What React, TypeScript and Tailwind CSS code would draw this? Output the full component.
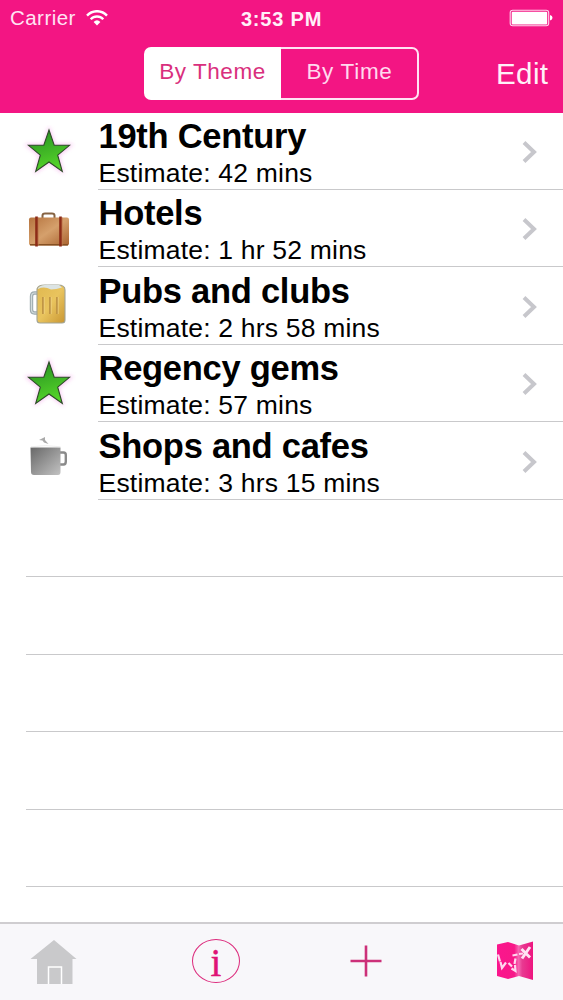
type IconName = 'star' | 'suitcase' | 'beer' | 'mug'

type Tour = {
  id: string
  title: string
  estimate: string
  icon: IconName
}

const tours: Tour[] = [
  { id: 'century', title: '19th Century', estimate: '42 mins', icon: 'star' },
  { id: 'hotels', title: 'Hotels', estimate: '1 hr 52 mins', icon: 'suitcase' },
  { id: 'pubs', title: 'Pubs and clubs', estimate: '2 hrs 58 mins', icon: 'beer' },
  { id: 'regency', title: 'Regency gems', estimate: '57 mins', icon: 'star' },
  { id: 'shops', title: 'Shops and cafes', estimate: '3 hrs 15 mins', icon: 'mug' },
]

export default function App() {
  return (
    <div className="flex h-[1000px] w-[563px] flex-col overflow-hidden bg-white font-['Liberation_Sans',Arial,sans-serif] text-black">
      <header className="h-[112.5px] shrink-0 bg-[#f31583] text-white">
        <StatusBar />
        <NavBar />
      </header>

      <main className="flex-1 overflow-hidden">
        {tours.map((tour) => (
          <TourRow key={tour.id} tour={tour} />
        ))}
        {/* Empty rows keep their separators, like a plain table view */}
        {[0, 1, 2, 3, 4].map((i) => (
          <div key={i} className="ml-[26px] h-[77.47px] border-b border-[#c9c9cb]" />
        ))}
      </main>

      <TabBar />
    </div>
  )
}

function StatusBar() {
  return (
    <div className="grid h-[36px] grid-cols-3 items-center px-[10px]">
      <div className="flex items-center gap-[10px] text-[#ffe3f3]">
        <span className="text-[20.5px] leading-none tracking-[0.45px]">Carrier</span>
        <svg width="22" height="16" viewBox="0 0 22 16" fill="none" stroke="#fff" strokeWidth="2.4">
          <path d="M1 5.6C6.6 -0.3 15.4 -0.3 21 5.6" />
          <path d="M4.7 9.2C8.2 5.5 13.8 5.5 17.3 9.2" />
          <path d="M7.6 11.9Q11 8.8 14.4 11.9L11 15.4Z" fill="#fff" stroke="none" />
        </svg>
      </div>
      <span className="pt-px text-center text-[20px] font-bold leading-none tracking-[0.8px] text-[#fff0f8]">
        3:53 PM
      </span>
      <svg className="justify-self-end" width="44" height="18" viewBox="0 0 44 18">
        <rect x="1.2" y="1.3" width="38.5" height="15.5" rx="2.5" fill="none" stroke="#ffd5ec" strokeWidth="1.1" />
        <rect x="2.7" y="2.7" width="35.5" height="12.7" rx="1" fill="#fff" />
        <path d="M41 6Q43.5 6.5 43.5 8.8T41 11.6Z" fill="#fff" />
      </svg>
    </div>
  )
}

function NavBar() {
  return (
    <div className="flex pl-[144px] pt-[11px]">
      <div className="flex h-[53px] w-[275px] text-[22.5px] leading-none">
        <button
          type="button"
          className="flex w-[137px] items-center justify-center rounded-l-[7px] bg-white pb-[2px] tracking-[0.55px] text-[#d92f7d]"
        >
          By Theme
        </button>
        <button
          type="button"
          className="flex flex-1 items-center justify-center rounded-r-[7px] border-2 border-l-0 border-[#ffe3f3] pb-[2px] pl-px tracking-[0.7px] text-[#ffd9ee]"
        >
          By Time
        </button>
      </div>
      <button type="button" className="ml-[77px] h-[53px] text-[29.5px] leading-[54px] tracking-[0.4px] text-[#fff0f8]">
        Edit
      </button>
    </div>
  )
}

function TourRow({ tour }: { tour: Tour }) {
  return (
    <div className="flex h-[77.47px]">
      <div className="flex w-[98px] shrink-0 justify-center pt-[12px]">
        <TourIcon name={tour.icon} />
      </div>
      <div className="flex flex-1 items-center justify-between border-b border-[#c9c9cb]">
        <div className="whitespace-nowrap pl-[0.5px] pt-[4px]">
          <div className="text-[34.5px] font-bold leading-[40px] tracking-[-0.27px]">{tour.title}</div>
          <div className="text-[26.5px] leading-[34px] tracking-[0.2px]">Estimate: {tour.estimate}</div>
        </div>
        <svg className="mr-[24px] mt-[2px]" width="18" height="24" viewBox="0 0 18 24" fill="none" stroke="#c7c7cc" strokeWidth="4">
          <path d="M3 2.5L13 12L3 21.5" />
        </svg>
      </div>
    </div>
  )
}

function TourIcon({ name }: { name: IconName }) {
  if (name === 'star') {
    return (
      <svg width="54" height="54" viewBox="0 0 54 54">
        <defs>
          <linearGradient id="starFill" x1="0" y1="0" x2="0.3" y2="1">
            <stop offset="0" stopColor="#258d22" />
            <stop offset="1" stopColor="#54d329" />
          </linearGradient>
          <filter id="starGlow" x="-20%" y="-20%" width="140%" height="140%">
            <feGaussianBlur stdDeviation="2" />
          </filter>
        </defs>
        <path d="M27 4L32.5 20H49L36 30.5L40.5 47L27 37L13.5 47L18 30.5L5 20H22Z" fill="#f6b5ee" stroke="#f6b5ee" strokeWidth="2" filter="url(#starGlow)" opacity=".8" />
        <path d="M27 5L32.2 20.3H47.5L35.7 30.2L40.3 46.5L27 37L13.7 46.5L18.3 30.2L6.5 20.3H21.8Z" fill="url(#starFill)" stroke="#2d4a28" strokeWidth="1.1" />
      </svg>
    )
  }
  if (name === 'suitcase') {
    return (
      <svg width="54" height="54" viewBox="0 0 54 54">
        <defs>
          <linearGradient id="leather" x1="0" y1="0" x2="1" y2="1">
            <stop offset="0" stopColor="#b5733e" />
            <stop offset="0.5" stopColor="#d5a06c" />
            <stop offset="1" stopColor="#a9632f" />
          </linearGradient>
        </defs>
        <path d="M20.5 16V13.5Q20.5 11.5 23 11.5H30Q32.5 11.5 32.5 13.5V16" fill="none" stroke="#866342" strokeWidth="2" />
        <rect x="7" y="15.5" width="40" height="28" rx="2" fill="url(#leather)" />
        <path d="M8 42.8H46" stroke="#855022" strokeWidth="1.5" />
        <path d="M14.5 14.5V44.5M38.5 14.5V44.5" stroke="#8d2b17" strokeWidth="2.6" />
        <path d="M16.3 15.5V43.5M40.3 15.5V43.5" stroke="#c07850" strokeWidth=".7" />
      </svg>
    )
  }
  if (name === 'beer') {
    return (
      <svg width="54" height="54" viewBox="0 0 54 54">
        <defs>
          <linearGradient id="beerFill" x1="0" y1="0" x2="1" y2="1">
            <stop offset="0" stopColor="#e0b850" />
            <stop offset="0.5" stopColor="#e9c45e" />
            <stop offset="1" stopColor="#c99632" />
          </linearGradient>
        </defs>
        <path d="M15 14H12.5Q9.5 14 9.5 17.5V30.5Q9.5 34 12.5 34H15" fill="none" stroke="#9eabae" strokeWidth="3.4" />
        <path d="M15 14H12.5Q9.5 14 9.5 17.5V30.5Q9.5 34 12.5 34H15" fill="none" stroke="#d3dcdc" strokeWidth="1.2" />
        <path d="M15 10Q16 6 23 6H36Q43 6 43 11V41Q43 44 40 44H18Q15 44 15 41Z" fill="url(#beerFill)" stroke="#a2a494" strokeWidth="1.1" />
        <path d="M16 9Q20 5 29 6H37L40 8.5Q34 10.5 29 10.5Q22 7 16 10Z" fill="#dce4e4" />
        <path d="M21 18V35M28 18V35M35 18V35" stroke="#bd9243" strokeWidth="1.8" />
        <path d="M22.2 18V35M29.2 18V35M36.2 18V35" stroke="#f0d78a" strokeWidth=".7" />
      </svg>
    )
  }
  return (
    <svg width="54" height="54" viewBox="0 0 54 54">
      <defs>
        <linearGradient id="mugFill" x1="0" y1="0" x2="1" y2="1">
          <stop offset="0" stopColor="#686868" />
          <stop offset="1" stopColor="#c2c2c2" />
        </linearGradient>
      </defs>
      <path d="M17 6L23 3L23 6L26.500 10L22 8.500L20.500 6.500Z" fill="#aaa" />
      <path d="M37 18.5H41.5Q43.8 18.5 43.8 21V27.5Q43.8 30.5 41.5 30.5H37" fill="none" stroke="#8a8a8a" strokeWidth="2.4" />
      <path d="M8.500 13.5H38.5V38Q38.5 41 36 41H12Q9 41 9 38Z" fill="url(#mugFill)" />
      <path d="M9 12.8Q23.5 10.500 38.5 12.8" fill="none" stroke="#e8e8e8" strokeWidth=".8" />
    </svg>
  )
}

function TabBar() {
  return (
    <nav className="flex h-[78.5px] shrink-0 items-center justify-between border-t-2 border-[#cfcdd0] bg-[#f8f7fa] pb-px pl-[30px] pr-[29px]">
      <svg width="47" height="48" viewBox="0 0 47 48">
        <path d="M24 3L46.5 22H42.5V47H7V22H0.5Z" fill="#c9c9cb" />
        <path d="M18.5 47V30H31.5V47" fill="none" stroke="#fff" strokeWidth="1.5" />
      </svg>
      <span className="ml-[21px] flex h-[44px] w-[48px] items-center justify-center rounded-[50%] border-[1.8px] border-[#dc2a7c] pt-[2px] font-['Liberation_Serif',serif] text-[39px] leading-none text-[#df1376] [-webkit-text-stroke:0.4px_#df1376]">
        i
      </span>
      <svg className="ml-[16px]" width="32" height="32" viewBox="0 0 32 32" stroke="#cc3079" strokeWidth="2.6">
        <path d="M0.5 16H31.5M16 0.5V31.5" />
      </svg>
      <svg className="ml-[20px]" width="38" height="40" viewBox="0 0 38 40">
        <defs>
          <linearGradient id="mapFill">
            <stop offset="0" stopColor="#fb168d" />
            <stop offset="0.48" stopColor="#f81888" />
            <stop offset="0.6" stopColor="#f568b2" />
            <stop offset="0.7" stopColor="#e83a91" />
            <stop offset="1" stopColor="#ee147f" />
          </linearGradient>
        </defs>
        <path d="M1 3.5L12 1L23 4.5L37 0.5V39L23 35L12 38L1 35Z" fill="url(#mapFill)" />
        <path d="M2 13.5L4 20.5M4.5 21L6 27L10 21.5M12.5 22L16 25.5M19.5 17.5L18.5 23M16.5 14.5L21.5 13.5M23 13L27 12.5M19 24L19.5 30L15.5 27.500" fill="none" stroke="#ffd8ef" strokeWidth="2.2" />
        <path d="M25.500 8L34 16.5M34 6L26 17.5" stroke="#ffe3f3" strokeWidth="2.9" />
      </svg>
    </nav>
  )
}
